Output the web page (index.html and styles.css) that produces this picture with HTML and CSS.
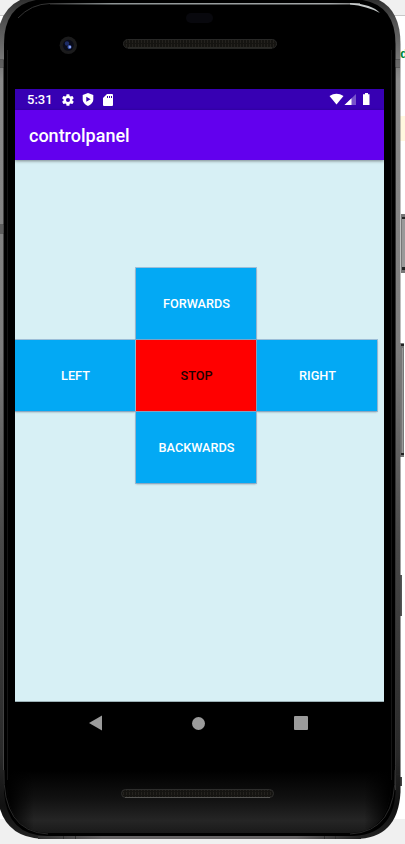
FILE: index.html
```
<!DOCTYPE html>
<html lang="en">
<head>
<meta charset="utf-8">
<title>controlpanel</title>
<link rel="stylesheet" href="styles.css">
</head>
<body>
<div class="stage">
  <svg class="frame" width="405" height="844" viewBox="0 0 405 844" aria-hidden="true">
    <defs>
      <linearGradient id="side" x1="0" y1="0" x2="0" y2="1">
        <stop offset="0" stop-color="#292929"/><stop offset=".035" stop-color="#555"/><stop offset=".1" stop-color="#8a8a8a"/><stop offset=".42" stop-color="#7c7c7c"/><stop offset=".65" stop-color="#484848"/><stop offset=".9" stop-color="#292929"/><stop offset=".96" stop-color="#111"/><stop offset="1" stop-color="#222"/>
      </linearGradient>
      <linearGradient id="face" x1="0" y1="0" x2="0" y2="1">
        <stop offset="0" stop-color="#000"/><stop offset=".925" stop-color="#000"/><stop offset=".96" stop-color="#121212"/><stop offset=".985" stop-color="#252525"/><stop offset="1" stop-color="#191919"/>
      </linearGradient>
      <linearGradient id="rim" x1="0" y1="0" x2="1" y2="0">
        <stop offset="0" stop-color="#000"/><stop offset=".07" stop-color="#000" stop-opacity="0"/><stop offset=".93" stop-color="#000" stop-opacity="0"/><stop offset="1" stop-color="#000"/>
      </linearGradient>
      <linearGradient id="shine" x1="0" y1="0" x2="1" y2="0">
        <stop offset="0" stop-color="#333"/><stop offset=".2" stop-color="#8d9394"/><stop offset=".9" stop-color="#a4a8a9"/><stop offset="1" stop-color="#777"/>
      </linearGradient>
      <linearGradient id="base" x1="0" y1="0" x2="1" y2="0">
        <stop offset="0" stop-color="#333"/><stop offset=".2" stop-color="#666465"/><stop offset=".8" stop-color="#666465"/><stop offset="1" stop-color="#222"/>
      </linearGradient>
      <pattern id="mesh" width="3" height="4" patternUnits="userSpaceOnUse">
        <rect width="3" height="4" fill="#151411"/><rect width="1" height="3" fill="#24221e"/>
      </pattern>
    </defs>
    <rect width="405" height="844" fill="#fff"/>
    <rect width="405" height="15" fill="#f0f0f0"/>
    <rect y="15" width="405" height="1" fill="#c8c8c8"/>
    <rect x="400" y="116" width="5" height="25" fill="#fff8df"/>
    <rect y="819" width="405" height="25" fill="#f0f0f0"/>
    <rect x="401" y="214" width="4" height="59" fill="#777"/>
    <rect x="402" y="217" width="3" height="2" fill="#222"/><rect x="402" y="219" width="3" height="48" fill="#999"/><rect x="402" y="267" width="3" height="3" fill="#222"/>
    <rect x="400" y="343" width="4" height="114" fill="#777"/>
    <rect x="401" y="344" width="3" height="2" fill="#222"/><rect x="402" y="348" width="1" height="105" fill="#999"/><rect x="401" y="453" width="3" height="2" fill="#222"/>
    <rect x="400" y="575" width="2" height="41" fill="#555"/>
    <rect x="400" y="777" width="2" height="9" fill="#444"/>
    <path d="M-3 46Q-3 -5 46 -5H354Q400.500 -5 400.500 44V792Q398 839 355 839H42Q0 837 -3 792Z" fill="url(#side)"/>
    <path d="M4 44Q4 -1 48 -1H350Q395.500 -1 395.500 44V792Q393 836 350 836H48Q7 836 4 792Z" fill="#000"/>
    <path d="M3.500 60V770" stroke="#444" fill="none"/>
    <path d="M395.500 60V790" stroke="#333" fill="none"/>
    <rect x="38" y="836" width="323" height="3" fill="url(#base)"/>
    <path d="M63.500 836V839M75.500 836V839M324.500 836V839M335.500 836V839" stroke="#303030"/>
    <path d="M7 50Q7 5 49 5H349Q391 5 391 50V786Q389 833 349 833H49Q9 833 7 786Z" fill="url(#face)"/>
    <path d="M7 50Q7 5 49 5H349Q391 5 391 50V786Q389 833 349 833H49Q9 833 7 786Z" fill="url(#rim)"/>
    <path d="M7.500 50V780M391.500 50V780" stroke="#151515" fill="none"/>
    <path d="M4 770Q2 832 48 834M395 770Q397 832 350 834" stroke="#292929" fill="none"/>
    <rect x="50" y="3" width="310" height="1.500" fill="url(#shine)"/>
    <path d="M18 18Q31 4 50 3.500" stroke="#333" fill="none"/>
    <path d="M350 3Q372 4 380 13Q367 6 350 4.500Z" fill="#c7cbcb"/>
    <path d="M0 59.500H4M0 67.500H4M395 59.500H400M395 67.500H400M0 224.500H4M0 233.500H4M395 765.500H400M395 774.500H400" stroke="#282828" opacity=".4"/>
    <rect x="0" y="225" width="4" height="8" fill="#444" opacity=".6"/>
    <rect x="0" y="60" width="4" height="7" fill="#444" opacity=".5"/>
    <rect x="395" y="60" width="5" height="7" fill="#555" opacity=".5"/>
    <rect x="186" y="13" width="27" height="10" rx="5" fill="#08080d"/>
    <circle cx="68.300" cy="45.300" r="8.700" fill="#1b1b1c"/>
    <circle cx="68.300" cy="45.300" r="5.500" fill="#090b18"/>
    <circle cx="67" cy="43.500" r="2.200" fill="#1d2c66"/><circle cx="69.500" cy="47" r="2" fill="#4460bc"/><rect x="69" y="46" width="2" height="2" fill="#8ca2ef"/>
    <rect x="123.500" y="39.500" width="153" height="8.500" rx="4.200" fill="url(#mesh)" stroke="#282827"/>
    <path d="M128 48H272" stroke="#393937"/>
    <rect x="121.500" y="789.500" width="152" height="8" rx="4" fill="url(#mesh)" stroke="#2d2d2c"/>
    <path d="M125 797.500H270" stroke="#555553"/>
  </svg>
  <span class="peek">d</span>
  <main class="screen">
    <div class="status">
      <span class="time">5:31</span>
      <svg class="gear" width="14" height="14" viewBox="0 0 24 24"><path fill="#fff" d="M19.400 13a7.500 7.500 0 0 0 0-2l2.100-1.600a.5.500 0 0 0 .1-.7l-2-3.400a.5.500 0 0 0-.6-.2l-2.500 1a7 7 0 0 0-1.700-1l-.4-2.600a.5.500 0 0 0-.5-.5h-4a.5.500 0 0 0-.5.500L9 5.100a7 7 0 0 0-1.700 1l-2.500-1a.5.500 0 0 0-.6.200l-2 3.400a.5.500 0 0 0 .1.700L4.500 11a7.500 7.500 0 0 0 0 2l-2.200 1.600a.5.500 0 0 0-.1.700l2 3.400c.1.200.4.300.6.200l2.500-1a7 7 0 0 0 1.700 1l.4 2.600c0 .3.300.5.500.5h4c.3 0 .5-.2.500-.5l.4-2.600a7 7 0 0 0 1.700-1l2.500 1c.2.100.5 0 .6-.2l2-3.400a.5.500 0 0 0-.1-.7zM12 15.500a3.500 3.500 0 1 1 0-7 3.500 3.500 0 0 1 0 7z"/></svg>
      <svg class="shield" width="12" height="13" viewBox="0 0 12 13"><path fill="#fff" fill-rule="evenodd" d="M6 0L11.300 2V6.500C11.300 9.500 8.500 12 6 13C3.500 12 .7 9.500 .7 6.500V2ZM4.300 3.700V8.800L8.600 6.200Z"/></svg>
      <svg class="card" width="10" height="12" viewBox="0 0 10 12"><path fill="#fff" fill-rule="evenodd" d="M4 0H9Q10 0 10 1V11Q10 12 9 12H1Q0 12 0 11V4ZM4 2V4H5V2ZM6 2V4H7V2ZM8 2V4H9V2Z"/></svg>
      <svg class="signals" width="42" height="13" viewBox="0 0 42 13"><path fill="#fff" d="M.5 3Q7.500-1.500 14.500 3L7.500 11.500Z"/><path fill="#fff" opacity=".32" d="M27 1V12H15.500Z"/><path fill="#fff" d="M22.500 5.300V12H15.500Z"/><path fill="#fff" d="M35 1.300H36V0H39V1.300H40.500V12H34V1.300Z"/></svg>
    </div>
    <header class="appbar">controlpanel</header>
    <div class="panel">
      <div class="pad">
        <button class="btn forwards">FORWARDS</button>
        <button class="btn left">LEFT</button>
        <button class="btn stop">STOP</button>
        <button class="btn right">RIGHT</button>
        <button class="btn backwards">BACKWARDS</button>
      </div>
    </div>
    <nav class="nav">
      <svg width="13" height="16" viewBox="0 0 13 16"><path d="M13 .5V15.500L0 8Z" fill="#9b9b9b"/></svg>
      <svg width="13" height="13" viewBox="0 0 13 13"><circle cx="6.500" cy="6.500" r="6.500" fill="#9b9b9b"/></svg>
      <svg width="14" height="14" viewBox="0 0 14 14"><rect width="14" height="14" rx="1" fill="#9b9b9b"/></svg>
    </nav>
  </main>
</div>
</body>
</html>
```
FILE: styles.css
```
body {
  margin: 0;
  overflow: hidden;
  font-family: Roboto, "Liberation Sans", sans-serif;
}
.stage {
  position: relative;
  box-sizing: border-box;
  width: 405px;
  height: 844px;
  padding: 89px 21px 0 15px;
  overflow: hidden;
}
.frame {
  position: absolute;
  inset: 0;
}
.peek {
  position: absolute;
  left: 400px;
  top: 47px;
  color: #00873c;
  font: bold 13px/16px "Liberation Mono", monospace;
}
.screen {
  position: relative;
  width: 369px;
}
.status {
  display: flex;
  align-items: center;
  box-sizing: border-box;
  height: 21px;
  padding: 0 13px 0 12px;
  background: #3700b3;
  color: #fff;
}
.time {
  width: 34px;
  font-size: 13px;
  font-weight: 500;
  line-height: 21px;
}
.shield {
  margin-left: 7px;
}
.card {
  margin-left: 9px;
}
.signals {
  margin-left: auto;
}
.appbar {
  position: relative;
  box-sizing: border-box;
  height: 50px;
  padding: 1px 14px 0;
  background: #6200ee;
  box-shadow: 0 1px 3px rgba(0, 0, 0, .45);
  color: #fff;
  font-size: 18px;
  font-weight: 500;
  line-height: 50px;
}
.panel {
  box-sizing: border-box;
  height: 542px;
  padding-top: 108px;
  background: #d7f0f5;
  border-bottom: 1px solid #9cb1b6;
}
.pad {
  display: grid;
  grid-template-columns: repeat(3, 120px);
  grid-template-rows: repeat(3, 71px);
  grid-template-areas:
    ". forwards ."
    "left stop right"
    ". backwards .";
  gap: 1px;
  width: 362px;
}
.btn {
  margin: 0;
  padding: 0 0 1px 1px;
  border: 0;
  background: #03a9f4;
  box-shadow: 0 0 0 1px rgba(120, 160, 200, .6), 0 1px 2px rgba(0, 0, 0, .35);
  color: #fff;
  font: 500 12.7px Roboto, "Liberation Sans", sans-serif;
}
.forwards {
  grid-area: forwards;
}
.left {
  grid-area: left;
  clip-path: inset(-1px 0 -3px 0);
}
.stop {
  grid-area: stop;
  background: #f00;
  color: #210000;
}
.right {
  grid-area: right;
}
.backwards {
  grid-area: backwards;
}
.nav {
  display: flex;
  align-items: center;
  height: 42px;
  padding-left: 74px;
}
.nav svg + svg {
  margin-left: 90px;
}
.nav svg + svg + svg {
  margin-left: 89px;
}
```
